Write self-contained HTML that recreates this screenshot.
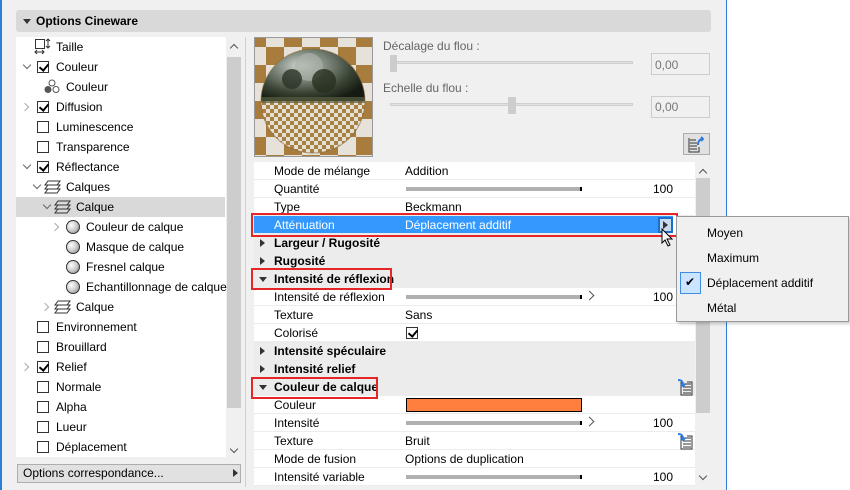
<!DOCTYPE html>
<html><head><meta charset="utf-8"><style>
*{margin:0;padding:0;box-sizing:border-box}
body{width:850px;height:490px;overflow:hidden;background:#fff;font-family:"Liberation Sans",sans-serif;font-size:12px;color:#000;position:relative}
.a{position:absolute}
.win{left:0;top:0;width:727px;height:490px;background:#f0f0f0;border-left:2px solid #2b7fd8;border-right:1px solid #2b7fd8}
.t{position:absolute;white-space:nowrap;line-height:14px}
.cb{position:absolute;width:12px;height:12px;border:1px solid #333;background:#fff}
.cb.on::after{content:"";position:absolute;left:3px;top:0px;width:4px;height:7px;border-right:2px solid #000;border-bottom:2px solid #000;transform:rotate(40deg)}
.chev{position:absolute;width:6px;height:6px;border-right:1.5px solid #666;border-bottom:1.5px solid #666}
.down{transform:rotate(45deg)}
.right{transform:rotate(-45deg);border-color:#aaa}
.sph{position:absolute;width:14px;height:14px;border-radius:50%;border:1px solid #333;background:radial-gradient(circle at 35% 35%,#fff 0,#ccc 50%,#777 100%)}
.row{position:absolute;left:254px;width:441px;height:18px;background:#fff;border-bottom:1px solid #ececec}
.grp{background:#ececec;font-weight:bold}
.lab{position:absolute;left:20px;top:2px;white-space:nowrap}
.val{position:absolute;left:151px;top:2px;white-space:nowrap}
.bar{position:absolute;left:152px;top:7px;width:176px;height:4px;background:#b0b0b0;border-right:2px solid #000}
.num{position:absolute;right:22px;top:2px}
.tri{position:absolute;left:6px;top:5px;width:0;height:0;border-top:4px solid transparent;border-bottom:4px solid transparent;border-left:5px solid #333}
.trid{position:absolute;left:5px;top:7px;width:0;height:0;border-left:4px solid transparent;border-right:4px solid transparent;border-top:5px solid #333}
.red{position:absolute;border:2px solid #e52626}
</style></head><body>
<div class="a win"></div>
<div class="a" style="left:16px;top:10px;width:695px;height:22px;background:#d9d9d9;border-radius:3px"></div>
<div class="a" style="left:23px;top:19px;border-left:4px solid transparent;border-right:4px solid transparent;border-top:5px solid #333"></div>
<div class="t" style="left:36px;top:14px;font-weight:bold">Options Cineware</div>

<div class="a" style="left:16px;top:37px;width:210px;height:420px;background:#fff"></div>
<div class="a" style="left:226px;top:37px;width:16px;height:420px;background:#f0f0f0"></div>
<div class="a" style="left:227px;top:57px;width:14px;height:351px;background:#cdcdcd"></div>
<div class="chev" style="left:231px;top:45px;transform:rotate(-135deg);border-color:#555"></div>
<div class="chev" style="left:231px;top:446px;transform:rotate(45deg);border-color:#555"></div>
<div class="a" style="left:16px;top:197px;width:209px;height:20px;background:#d9d9d9"></div>

<svg class="a" style="left:34px;top:38px" width="18" height="17" viewBox="0 0 18 17"><rect x="1.5" y="1.5" width="9" height="9" fill="none" stroke="#333"/><path d="M14 1v9M12 3l2-2 2 2M12 8l2 2 2-2M1 14h9M3 12l-2 2 2 2M8 12l2 2-2 2" stroke="#333" fill="none"/></svg>
<div class="t" style="left:56px;top:40px">Taille</div>
<div class="chev down" style="left:24px;top:62px"></div><div class="cb on" style="left:37px;top:61px"></div><div class="t" style="left:56px;top:60px">Couleur</div>
<svg class="a" style="left:44px;top:79px" width="16" height="15"><circle cx="8" cy="4" r="3" fill="#fff" stroke="#555"/><circle cx="4" cy="10.5" r="3" fill="#555" stroke="#555"/><circle cx="12" cy="10.5" r="3" fill="#fff" stroke="#555"/></svg>
<div class="t" style="left:66px;top:80px">Couleur</div>
<div class="chev right" style="left:22px;top:104px"></div><div class="cb on" style="left:37px;top:101px"></div><div class="t" style="left:56px;top:100px">Diffusion</div>
<div class="cb" style="left:37px;top:121px"></div><div class="t" style="left:56px;top:120px">Luminescence</div>
<div class="cb" style="left:37px;top:141px"></div><div class="t" style="left:56px;top:140px">Transparence</div>
<div class="chev down" style="left:24px;top:162px"></div><div class="cb on" style="left:37px;top:161px"></div><div class="t" style="left:56px;top:160px">Réflectance</div>
<div class="chev down" style="left:34px;top:182px"></div>
<svg class="a" style="left:44px;top:179px" width="18" height="16"><path d="M4 2h12l-3 4H1zM4 6h12l-3 4H1zM4 10h12l-3 4H1z" fill="none" stroke="#333"/></svg>
<div class="t" style="left:66px;top:180px">Calques</div>
<div class="chev down" style="left:44px;top:202px"></div>
<svg class="a" style="left:54px;top:199px" width="18" height="16"><path d="M4 2h12l-3 4H1zM4 6h12l-3 4H1zM4 10h12l-3 4H1z" fill="none" stroke="#333"/></svg>
<div class="t" style="left:76px;top:200px">Calque</div>
<div class="chev right" style="left:52px;top:224px"></div><div class="sph" style="left:66px;top:220px"></div><div class="t" style="left:86px;top:220px">Couleur de calque</div>
<div class="sph" style="left:66px;top:240px"></div><div class="t" style="left:86px;top:240px">Masque de calque</div>
<div class="sph" style="left:66px;top:260px"></div><div class="t" style="left:86px;top:260px">Fresnel calque</div>
<div class="sph" style="left:66px;top:280px"></div><div class="t" style="left:86px;top:280px">Echantillonnage de calque</div>
<div class="chev right" style="left:42px;top:304px"></div>
<svg class="a" style="left:54px;top:299px" width="18" height="16"><path d="M4 2h12l-3 4H1zM4 6h12l-3 4H1zM4 10h12l-3 4H1z" fill="none" stroke="#333"/></svg>
<div class="t" style="left:76px;top:300px">Calque</div>
<div class="cb" style="left:37px;top:321px"></div><div class="t" style="left:56px;top:320px">Environnement</div>
<div class="cb" style="left:37px;top:341px"></div><div class="t" style="left:56px;top:340px">Brouillard</div>
<div class="chev right" style="left:22px;top:364px"></div><div class="cb on" style="left:37px;top:361px"></div><div class="t" style="left:56px;top:360px">Relief</div>
<div class="cb" style="left:37px;top:381px"></div><div class="t" style="left:56px;top:380px">Normale</div>
<div class="cb" style="left:37px;top:401px"></div><div class="t" style="left:56px;top:400px">Alpha</div>
<div class="cb" style="left:37px;top:421px"></div><div class="t" style="left:56px;top:420px">Lueur</div>
<div class="cb" style="left:37px;top:441px"></div><div class="t" style="left:56px;top:440px">Déplacement</div>

<div class="a" style="left:17px;top:464px;width:224px;height:19px;background:#e1e1e1;border:1px solid #adadad"></div>
<div class="t" style="left:23px;top:466px">Options correspondance...</div>
<div class="a" style="left:233px;top:469px;border-top:4px solid transparent;border-bottom:4px solid transparent;border-left:5px solid #333"></div>
<div class="a" style="left:245px;top:37px;width:1px;height:450px;background:#d0d0d0"></div>

<svg class="a" style="left:254px;top:37px" width="119" height="120" viewBox="0 0 119 120">
<defs><pattern id="ck" width="36" height="36" patternUnits="userSpaceOnUse" x="-6" y="-8"><rect width="36" height="36" fill="#e6e2da"/><rect width="18" height="18" fill="#a87c3c"/><rect x="18" y="18" width="18" height="18" fill="#a87c3c"/></pattern>
<pattern id="ck2" width="8" height="8" patternUnits="userSpaceOnUse"><rect width="8" height="8" fill="#e4e0d8"/><rect width="4" height="4" fill="#a8803f"/><rect x="4" y="4" width="4" height="4" fill="#a8803f"/></pattern>
<radialGradient id="sk" cx="0.4" cy="0.45" r="0.6"><stop offset="0" stop-color="#d8dcd8"/><stop offset="0.3" stop-color="#8a948a"/><stop offset="0.7" stop-color="#3a4535"/><stop offset="1" stop-color="#151a12"/></radialGradient>
<clipPath id="sc"><circle cx="59" cy="64" r="52"/></clipPath></defs>
<rect width="119" height="120" fill="url(#ck)"/>
<rect x="0.5" y="0.5" width="118" height="119" fill="none" stroke="#999"/>
<circle cx="59" cy="64" r="52" fill="url(#ck2)"/>
<g clip-path="url(#sc)"><rect x="0" y="0" width="119" height="64" fill="url(#sk)"/>
<circle cx="55" cy="30" r="14" fill="#a8b0a8" opacity=".7"/><circle cx="38" cy="42" r="10" fill="#2a3325" opacity=".8"/><circle cx="70" cy="44" r="12" fill="#27301f" opacity=".8"/>
<rect x="0" y="60" width="119" height="6" fill="#5a6040" opacity=".7"/></g>
<circle cx="59" cy="64" r="52" fill="none" stroke="#8a6a3a" stroke-width="1" opacity=".6"/>
</svg>

<div class="t" style="left:383px;top:39px;color:#666">Décalage du flou :</div>
<div class="a" style="left:390px;top:61px;width:243px;height:3px;background:#e0e0e0;border:1px solid #d0d0d0"></div>
<div class="a" style="left:390px;top:55px;width:7px;height:17px;background:#cdcdcd"></div>
<div class="a" style="left:651px;top:53px;width:59px;height:22px;border:1px solid #ccc;background:#f0f0f0"></div>
<div class="t" style="left:655px;top:58px;color:#777">0,00</div>
<div class="t" style="left:383px;top:81px;color:#666">Echelle du flou :</div>
<div class="a" style="left:390px;top:103px;width:243px;height:3px;background:#e0e0e0;border:1px solid #d0d0d0"></div>
<div class="a" style="left:508px;top:97px;width:8px;height:17px;background:#cdcdcd"></div>
<div class="a" style="left:651px;top:96px;width:59px;height:22px;border:1px solid #ccc;background:#f0f0f0"></div>
<div class="t" style="left:655px;top:100px;color:#777">0,00</div>
<div class="a" style="left:683px;top:133px;width:27px;height:22px;border:1px solid #adadad;background:#e1e1e1"></div>
<svg class="a" style="left:688px;top:136px" width="18" height="17"><path d="M2 4h6M2 7h7M2 10h7M2 13h7M1 2v14h10V11" fill="none" stroke="#333"/><path d="M10 9c0-4 2-6 5-6M13 1l2 2-2 2" fill="none" stroke="#2a7be4" stroke-width="2"/></svg>

<div class="a" style="left:254px;top:162px;width:441px;height:324px;background:#fff"></div>
<div class="a" style="left:695px;top:162px;width:15px;height:324px;background:#f0f0f0"></div>
<div class="a" style="left:696px;top:178px;width:14px;height:235px;background:#cdcdcd"></div>
<div class="chev" style="left:700px;top:170px;transform:rotate(-135deg);border-color:#555"></div>
<div class="chev" style="left:700px;top:473px;transform:rotate(45deg);border-color:#555"></div>

<div class="row" style="top:162px"><span class="lab">Mode de mélange</span><span class="val">Addition</span></div>
<div class="row" style="top:180px"><span class="lab">Quantité</span><span class="bar"></span><span class="num">100</span></div>
<div class="row" style="top:198px"><span class="lab">Type</span><span class="val">Beckmann</span></div>
<div class="row" style="top:216px;background:#3399ff;color:#fff;width:419px"><span class="lab">Atténuation</span><span class="val">Déplacement additif</span></div>
<div class="a" style="left:658px;top:217px;width:15px;height:16px;border:2px solid #1a6fd0;background:#c8dcf0"></div>
<div class="a" style="left:663px;top:221px;border-top:4px solid transparent;border-bottom:4px solid transparent;border-left:5px solid #333"></div>
<div class="row grp" style="top:234px"><span class="tri"></span><span class="lab">Largeur / Rugosité</span></div>
<div class="row grp" style="top:252px"><span class="tri"></span><span class="lab">Rugosité</span></div>
<div class="row grp" style="top:270px"><span class="trid"></span><span class="lab">Intensité de réflexion</span></div>
<div class="row" style="top:288px"><span class="lab">Intensité de réflexion</span><span class="bar"></span><span class="a" style="left:332px;top:4px;width:7px;height:7px;border-top:1.5px solid #555;border-right:1.5px solid #555;transform:rotate(45deg)"></span><span class="num">100</span></div>
<div class="row" style="top:306px"><span class="lab">Texture</span><span class="val">Sans</span></div>
<div class="row" style="top:324px"><span class="lab">Colorisé</span><span class="cb on" style="left:152px;top:3px"></span></div>
<div class="row grp" style="top:342px"><span class="tri"></span><span class="lab">Intensité spéculaire</span></div>
<div class="row grp" style="top:360px"><span class="tri"></span><span class="lab">Intensité relief</span></div>
<div class="row grp" style="top:378px"><span class="trid"></span><span class="lab">Couleur de calque</span></div>
<div class="row" style="top:396px"><span class="lab">Couleur</span><span class="a" style="left:152px;top:2px;width:176px;height:14px;background:#ff7f3f;border:1px solid #000"></span></div>
<div class="row" style="top:414px"><span class="lab">Intensité</span><span class="bar"></span><span class="a" style="left:332px;top:4px;width:7px;height:7px;border-top:1.5px solid #555;border-right:1.5px solid #555;transform:rotate(45deg)"></span><span class="num">100</span></div>
<div class="row" style="top:432px"><span class="lab">Texture</span><span class="val">Bruit</span></div>
<div class="row" style="top:450px"><span class="lab">Mode de fusion</span><span class="val">Options de duplication</span></div>
<div class="row" style="top:468px"><span class="lab">Intensité variable</span><span class="bar"></span><span class="num">100</span></div>
<svg class="a" style="left:677px;top:378px" width="16" height="18"><path d="M6 6h8M6 9h8M6 12h8M6 15h8M4 4v13h11V4h-5" fill="none" stroke="#333"/><path d="M1 2c4 0 5 2 5 5M4 6l2 2 2-2" fill="none" stroke="#2a7be4" stroke-width="2"/></svg>
<svg class="a" style="left:677px;top:432px" width="16" height="18"><path d="M6 6h8M6 9h8M6 12h8M6 15h8M4 4v13h11V4h-5" fill="none" stroke="#333"/><path d="M1 2c4 0 5 2 5 5M4 6l2 2 2-2" fill="none" stroke="#2a7be4" stroke-width="2"/></svg>

<div class="red" style="left:251px;top:213px;width:427px;height:24px"></div>
<div class="red" style="left:251px;top:268px;width:141px;height:22px"></div>
<div class="red" style="left:251px;top:377px;width:127px;height:22px"></div>

<svg class="a" style="left:661px;top:228px" width="14" height="20"><path d="M1 1v14l3-3 3 6 2-1-3-6h5z" fill="#fff" stroke="#000"/></svg>

<div class="a" style="left:676px;top:216px;width:173px;height:106px;background:#f0f0f0;border:1px solid #999;box-shadow:2px 2px 3px rgba(0,0,0,.2)"></div>
<div class="t" style="left:707px;top:226px">Moyen</div>
<div class="t" style="left:707px;top:251px">Maximum</div>
<div class="a" style="left:680px;top:272px;width:21px;height:22px;background:#cce4ff;border:1px solid #3d8ee0"></div>
<div class="t" style="left:685px;top:275px;font-size:12px">✔</div>
<div class="t" style="left:707px;top:276px">Déplacement additif</div>
<div class="t" style="left:707px;top:301px">Métal</div>
</body></html>
